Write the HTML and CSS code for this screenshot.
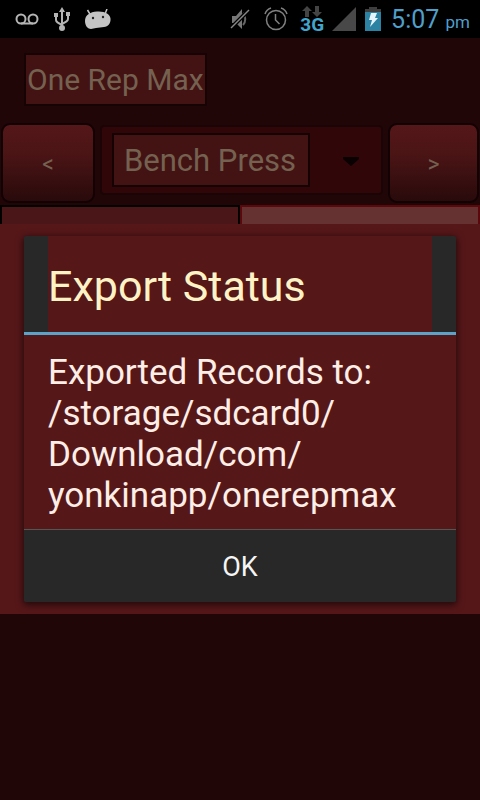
FILE: index.html
```
<!DOCTYPE html>
<html lang="en">
<head>
  <meta charset="UTF-8">
  <title>One Rep Max</title>
  <meta name="viewport" content="width=device-width, initial-scale=1.0">
  <link rel="stylesheet" href="styles.css">
</head>

<body>
  <!-- Status bar -->
  <header class="status-bar">
    <div class="status-left">
      <svg width="24" height="12" viewBox="0 0 24 12" fill="none" stroke="#b4b4b4" stroke-width="2">
        <circle cx="6" cy="6" r="4.500"/>
        <circle cx="18" cy="6" r="4.500"/>
        <path d="M6 10.500h12"/>
      </svg>
      <svg width="16" height="24" viewBox="0 0 16 24" fill="none" stroke="#b4b4b4" stroke-width="2">
        <path d="M8 4v16M2 9v4c0 2 2 3 6 5M14 8v4c0 2-2 3-6 5"/>
        <path d="M8 0l3 5H5zM0 6h4v4H0zM12 5h4v4h-4z" fill="#b4b4b4" stroke="none"/>
        <circle cx="8" cy="21" r="3" fill="#b4b4b4" stroke="none"/>
      </svg>
      <svg width="26" height="20" viewBox="0 0 26 20">
        <path d="M2.500 1l3 5M22 0l-2 5" stroke="#c4c4c4" stroke-width="1.500"/>
        <path d="M0 12C0 6 5 3 12 2.500c8-.5 13 2.500 13.500 7 .5 5-2.500 8-6.500 8.500l-4 .5-4 .5-5 1C3 20 0 17 0 12z" fill="#c4c4c4"/>
        <circle cx="8" cy="9" r="1.200" fill="#222"/>
        <circle cx="18" cy="8" r="1.200" fill="#222"/>
      </svg>
    </div>
    <div class="status-right">
      <svg class="muted" width="20" height="22" viewBox="0 0 20 22">
        <path d="M2 8h4l6-7v20l-6-6H2z" fill="#777"/>
        <path d="M13 5c3 3 3 9 0 12" fill="none" stroke="#666" stroke-width="2"/>
        <path d="M19 2L1 20" stroke="#000" stroke-width="4"/>
        <path d="M19 2L1 20" stroke="#888" stroke-width="1.500"/>
      </svg>
      <svg width="24" height="24" viewBox="0 0 24 24" fill="none" stroke="#808080" stroke-width="1.500">
        <circle cx="12" cy="13" r="9.500"/>
        <path d="M11.500 7v6l4 4M1 7c1-3 3-5 6-6M23 7c-1-3-3-5-6-6"/>
      </svg>
      <div class="network">
        <svg width="20" height="11" viewBox="0 0 20 11" fill="#444">
          <path d="M5 0l5 5H7v6H3V5H0zM15 11l-5-5h3V0h4v6h3z"/>
        </svg>
        <span>3G</span>
      </div>
      <svg class="signal" width="24" height="24" viewBox="0 0 24 24"><path d="M24 0v24H0z" fill="#484848"/></svg>
      <svg width="16" height="24" viewBox="0 0 16 24">
        <path d="M4 0h8v2h4v4H0V2h4z" fill="#3e3e3e"/>
        <path d="M0 5h16v19H0z" fill="#2b82a2"/>
        <path d="M6 6h6l-2 5h3L5 20l2-7H4z" fill="#e4f4fa"/>
      </svg>
      <div class="clock">5:07 <small>pm</small></div>
    </div>
  </header>

  <!-- App behind the dialog -->
  <main class="app">
    <h1 class="app-title">One Rep Max</h1>
    <div class="exercise-row">
      <button class="nav-btn" type="button" aria-label="Previous exercise">&lt;</button>
      <div class="exercise">
        <select class="exercise-select" aria-label="Exercise">
          <option>Bench Press</option>
        </select>
        <svg class="exercise-arrow" width="16" height="9" viewBox="0 0 16 9"><path d="M0 0h16v2L8 9 0 2z" fill="#090102"/></svg>
      </div>
      <button class="nav-btn" type="button" aria-label="Next exercise">&gt;</button>
    </div>
    <div class="tabs">
      <div class="tab"></div>
      <div class="tab tab-active"></div>
    </div>
  </main>

  <!-- Export dialog -->
  <div class="overlay">
    <div class="dialog-band">
      <div class="dialog" role="dialog" aria-labelledby="dialogTitle">
        <div class="dialog-header">
          <h2 id="dialogTitle">Export Status</h2>
        </div>
        <p class="dialog-message">Exported Records to: /storage/sdcard0/<wbr>Download/com/<wbr>yonkinapp/onerepmax</p>
        <button class="dialog-ok" type="button">OK</button>
      </div>
    </div>
  </div>
</body>
</html>
```
FILE: styles.css
```
* {
  box-sizing: border-box;
  margin: 0;
  padding: 0;
}
body {
  position: relative;
  min-height: 100vh;
  font-family: Roboto, "Liberation Sans", sans-serif;
  background: #210608;
  color: #756150;
}
button, select {
  font-family: inherit;
  color: inherit;
}

/* Status bar */
.status-bar {
  display: flex;
  justify-content: space-between;
  align-items: center;
  height: 38px;
  padding: 0 10px 0 15px;
  background: #000;
}
.status-left, .status-right {
  display: flex;
  align-items: center;
}
.status-left {
  gap: 15px;
}
.status-right {
  gap: 9px;
}
.muted {
  margin-right: 5px;
}
.network {
  display: flex;
  flex-direction: column;
  align-items: center;
  margin-left: 3px;
  font-size: 19px;
  font-weight: 700;
  line-height: 16px;
  color: #42a5cc;
}
.signal {
  margin-left: -1px;
}
.clock {
  margin-left: 1px;
  font-size: 25px;
  white-space: nowrap;
  color: #4f9fcb;
}
.clock small {
  font-size: 17px;
}

/* App */
.app-title {
  width: fit-content;
  margin: 15px 24px 17px;
  border: 2px solid #160304;
  padding: 0 1px;
  font-size: 30px;
  font-weight: 400;
  line-height: 49px;
  background: #431314;
}
.exercise-row {
  display: flex;
  gap: 5px;
  padding: 0 1px;
}
.nav-btn {
  width: 94px;
  height: 80px;
  border: 2px solid #120203;
  border-radius: 9px;
  padding-top: 2px;
  font-size: 23px;
  background: linear-gradient(#551719, #4a1415 40%, #290a0b);
}
.nav-btn:last-child {
  width: 91px;
}
.exercise {
  position: relative;
  flex: 1;
  height: 70px;
  margin: 2px 0 10px;
  border: 2px solid #1a0405;
  border-radius: 4px;
  padding: 6px 71px 6px 10px;
  background: #300609;
}
.exercise-select {
  width: 100%;
  height: 54px;
  appearance: none;
  border: 2px solid #150203;
  border-radius: 0;
  padding: 0 10px;
  font-size: 31px;
  background: #431314;
}
.exercise-arrow {
  position: absolute;
  top: 30px;
  right: 22px;
  pointer-events: none;
}

/* Tabs */
.tabs {
  display: flex;
}
.tab {
  flex: 1;
  height: 60px;
  border: 2px solid #030000;
  background: #4a1617;
}
.tab-active {
  border-color: #5a080c;
  background: #653131;
}

/* Dialog */
.overlay {
  position: absolute;
  inset: 38px 0 0;
  display: flex;
  align-items: center;
}
.dialog-band {
  width: 100%;
  padding: 12px 24px;
  background: #561719;
}
.dialog {
  border-radius: 2px;
  overflow: hidden;
  background: #561719;
  box-shadow: 0 2px 7px 1px rgba(0, 0, 0, 0.6);
}
.dialog-header {
  padding: 0 24px;
  border-bottom: 3px solid #5ba3c8;
  background: #282828;
}
.dialog-header h2 {
  height: 96px;
  padding-top: 2px;
  font-size: 43px;
  font-weight: 400;
  line-height: 96px;
  background: #561719;
  color: #fff3c6;
}
.dialog-message {
  padding: 17px 24px 13px;
  font-size: 35px;
  line-height: 41px;
  color: #ffeee6;
}
.dialog-ok {
  display: block;
  width: 100%;
  height: 73px;
  border: none;
  border-top: 1px solid #555;
  padding-top: 2px;
  font-size: 27px;
  background: #282828;
  color: #f5f5f5;
}
```
